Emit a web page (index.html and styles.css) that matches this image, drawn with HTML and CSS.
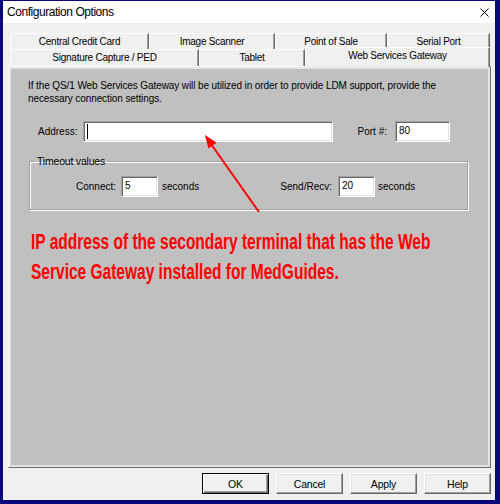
FILE: index.html
```html
<!DOCTYPE html>
<html>
<head>
<meta charset="utf-8">
<title>Configuration Options</title>
<link rel="stylesheet" href="styles.css">
</head>
<body>
<div class="window">
  <div class="titlebar">
    <span class="title">Configuration Options</span>
    <svg class="close" viewBox="0 0 9 9" width="9" height="9"><path d="M0.5 0.5 L8.5 8.5 M8.5 0.5 L0.5 8.5" stroke="#000" stroke-width="1" fill="none"/></svg>
  </div>
  <div class="dialog">
    <div class="tabs">
      <div class="tabrow back">
        <div class="tab w139">Central Credit Card</div>
        <div class="tab w126">Image Scanner</div>
        <div class="tab w112">Point of Sale</div>
        <div class="tab w103">Serial Port</div>
      </div>
      <div class="tabrow front">
        <div class="tab w189">Signature Capture / PED</div>
        <div class="tab w106">Tablet</div>
        <div class="tab w185 selected">Web Services Gateway</div>
      </div>
    </div>
    <div class="panel">
      <div class="panel-inner">
        <p class="para">If the QS/1 Web Services Gateway will be utilized in order to provide LDM support, provide the<br>necessary connection settings.</p>
        <div class="addr-row">
          <span class="lbl-addr">Address:</span>
          <div class="field w250"><span class="caret"></span></div>
          <span class="lbl-port">Port #:</span>
          <div class="field w55">80</div>
        </div>
        <fieldset class="group">
          <legend>Timeout values</legend>
          <div class="timeout-row">
            <span class="lbl-connect">Connect:</span>
            <div class="field w37">5</div>
            <span class="secs1">seconds</span>
            <span class="lbl-send">Send/Recv:</span>
            <div class="field w37">20</div>
            <span class="secs2">seconds</span>
          </div>
        </fieldset>
        <div class="note-box">
          <div class="note">IP address of the secondary terminal that has the Web<br>Service Gateway installed for MedGuides.</div>
        </div>
        <svg class="arrow" viewBox="11 69 477 396" preserveAspectRatio="none">
          <line x1="259" y1="212" x2="211" y2="144" stroke="#ff0000" stroke-width="2"/>
          <polygon points="205,135 216.6,142.7 208.4,148.5" fill="#ff0000"/>
        </svg>
      </div>
    </div>
    <div class="buttons">
      <div class="btn default">OK</div>
      <div class="btn">Cancel</div>
      <div class="btn">Apply</div>
      <div class="btn">Help</div>
    </div>
  </div>
</div>
</body>
</html>
```
FILE: styles.css
```css
* { box-sizing: border-box; }
html, body { margin: 0; padding: 0; }
body {
  width: 500px;
  height: 504px;
  overflow: hidden;
  background: #08087a;
  font-family: "Liberation Sans", Arial, sans-serif;
  font-size: 10px;
  color: #000;
}
.window {
  width: 500px;
  height: 504px;
  border-style: solid;
  border-color: #08087a;
  border-width: 1px 5px 4px 3px;
  background: #f0f0f0;
  display: flex;
  flex-direction: column;
}
.titlebar {
  height: 22px;
  flex: none;
  background: #fff;
  display: flex;
  align-items: center;
  justify-content: space-between;
  padding: 0 6px 0 4px;
}
.title {
  font-size: 12px;
  letter-spacing: -0.45px;
}
.close { display: block; }
.dialog {
  flex: 1;
  padding: 10px 4px 0 5px;
  display: flex;
  flex-direction: column;
}
.tabs {
  margin: 0 1px 0 2px;
  display: flex;
  flex-direction: column;
}
.tabrow { display: flex; }
.tabrow.back { height: 16px; }
.tabrow.front { height: 17px; align-items: flex-end; }
.tab {
  height: 100%;
  display: flex;
  align-items: center;
  justify-content: center;
  letter-spacing: -0.25px;
  background: #f0f0f0;
  border-top: 1px solid #fff;
  border-left: 1px solid #fff;
  border-right: 1px solid #696969;
  box-shadow: inset -1px 0 0 #a0a0a0;
  padding-bottom: 1px;
}
.tab.selected {
  height: 20px;
  margin-bottom: -1px;
  position: relative;
  z-index: 2;
  padding-bottom: 4px;
}
.w139 { width: 139px; }
.w126 { width: 126px; }
.w112 { width: 112px; }
.w103 { width: 103px; }
.w189 { width: 189px; }
.w106 { width: 106px; }
.w185 { width: 185px; }
.panel {
  height: 402px;
  flex: none;
  border: 1px solid;
  border-color: #fff #696969 #696969 #fff;
}
.panel-inner {
  height: 100%;
  border: 2px solid #e3e3e3;
  background: #c0c0c0;
  position: relative;
  display: flex;
  flex-direction: column;
  align-items: flex-start;
}
.para {
  margin: 10px 0 0 17px;
  line-height: 13px;
  letter-spacing: -0.1px;
}
.addr-row {
  display: flex;
  align-items: center;
  height: 21px;
  margin-top: 16px;
  padding-left: 27px;
}
.lbl-addr { width: 45px; }
.lbl-port { width: 62px; text-align: right; padding-right: 8px; }
.field {
  height: 21px;
  background: #fff;
  border: 1px solid;
  border-color: #a0a0a0 #fff #fff #a0a0a0;
  box-shadow: inset 1px 1px 0 #696969, inset -1px -1px 0 #e3e3e3;
  padding: 2px 0 0 3px;
  line-height: 14px;
  position: relative;
}
.w250 { width: 250px; }
.w55 { width: 55px; }
.w37 { width: 37px; }
.caret {
  display: block;
  width: 1px;
  height: 15px;
  background: #000;
}
.group {
  margin: 13px 0 0 18px;
  width: 439px;
  padding: 9px 0 12px 0;
  border: 1px solid #a0a0a0;
  box-shadow: 1px 1px 0 #fff, inset 1px 1px 0 #fff;
}
.group legend {
  margin-left: 5px;
  padding: 0 2px;
  line-height: 12px;
  font-size: 10.5px;
  letter-spacing: -0.2px;
}
.timeout-row {
  display: flex;
  align-items: center;
  height: 21px;
}
.lbl-connect { width: 91px; text-align: right; padding-right: 5px; }
.secs1 { margin-left: 4px; width: 60px; }
.lbl-send { width: 116px; text-align: right; padding-right: 6px; }
.secs2 { margin-left: 3px; }
.note-box {
  margin: 17px 0 0 20px;
  width: 420px;
  overflow: visible;
}
.note {
  font-family: "Liberation Sans", Arial, sans-serif;
  font-weight: bold;
  font-size: 22px;
  line-height: 29.5px;
  color: #ff0000;
  white-space: nowrap;
  width: 575px;
  transform: scaleX(0.705);
  transform-origin: left top;
}
.arrow {
  position: absolute;
  left: 0;
  top: 0;
  width: 100%;
  height: 100%;
  pointer-events: none;
}
.buttons {
  display: flex;
  justify-content: flex-end;
  gap: 7px;
  margin-top: 5px;
}
.btn {
  width: 67px;
  height: 21px;
  display: flex;
  align-items: center;
  justify-content: center;
  background: #f0f0f0;
  border: 1px solid;
  border-color: #fff #696969 #696969 #fff;
  box-shadow: inset -1px -1px 0 #a0a0a0, inset 1px 1px 0 #e3e3e3;
  font-size: 10.5px;
  letter-spacing: -0.2px;
}
.btn.default {
  border-color: #000;
  box-shadow: inset 1px 1px 0 #fff, inset -1px -1px 0 #696969, inset -2px -2px 0 #a0a0a0;
}
```
